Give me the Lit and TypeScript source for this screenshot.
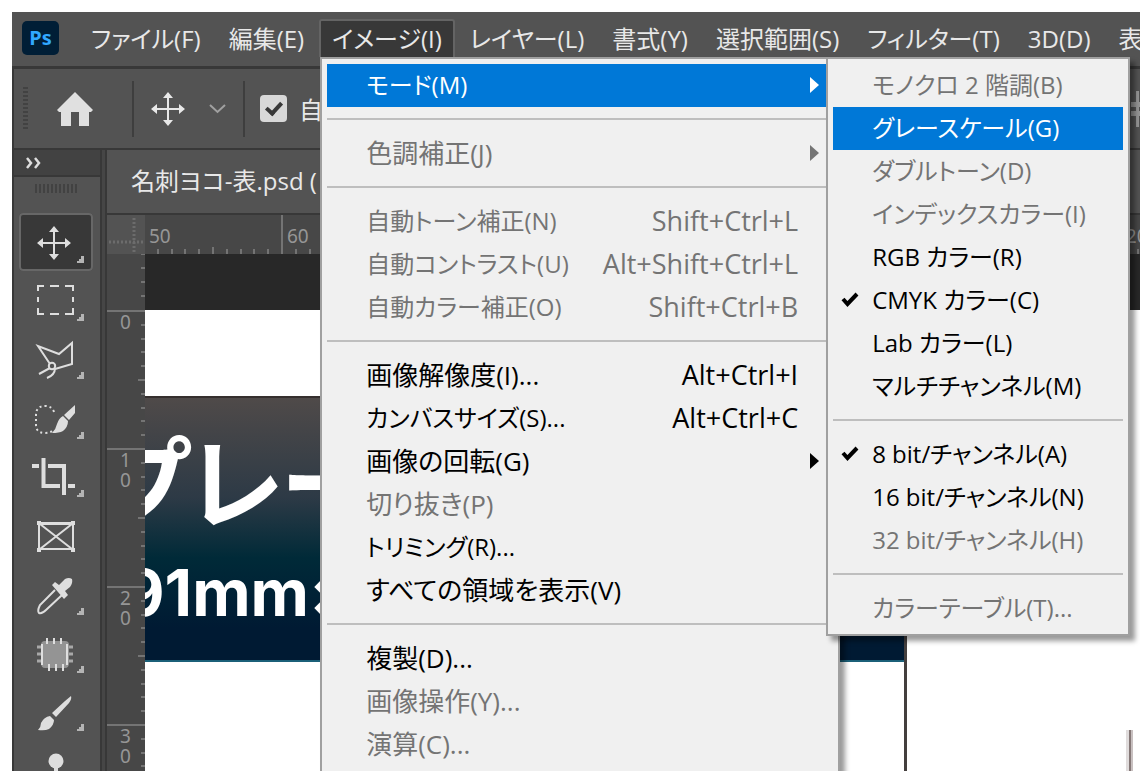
import { LitElement, html, svg, css, nothing } from "lit";
import { customElement, property } from "lit/decorators.js";

type Entry = {
  label: string;
  keys?: string;
  off?: boolean;
  active?: boolean;
  checked?: boolean;
  sub?: boolean;
};

const SEP = null;

const modeMenu: (Entry | null)[] = [
  { label: "モノクロ 2 階調(B)", off: true },
  { label: "グレースケール(G)", active: true },
  { label: "ダブルトーン(D)", off: true },
  { label: "インデックスカラー(I)", off: true },
  { label: "RGB カラー(R)" },
  { label: "CMYK カラー(C)", checked: true },
  { label: "Lab カラー(L)" },
  { label: "マルチチャンネル(M)" },
  SEP,
  { label: "8 bit/チャンネル(A)", checked: true },
  { label: "16 bit/チャンネル(N)" },
  { label: "32 bit/チャンネル(H)", off: true },
  SEP,
  { label: "カラーテーブル(T)...", off: true },
];

const imageMenu: (Entry | null)[] = [
  { label: "モード(M)", active: true, sub: true },
  SEP,
  { label: "色調補正(J)", off: true, sub: true },
  SEP,
  { label: "自動トーン補正(N)", keys: "Shift+Ctrl+L", off: true },
  { label: "自動コントラスト(U)", keys: "Alt+Shift+Ctrl+L", off: true },
  { label: "自動カラー補正(O)", keys: "Shift+Ctrl+B", off: true },
  SEP,
  { label: "画像解像度(I)...", keys: "Alt+Ctrl+I" },
  { label: "カンバスサイズ(S)...", keys: "Alt+Ctrl+C" },
  { label: "画像の回転(G)", sub: true },
  { label: "切り抜き(P)", off: true },
  { label: "トリミング(R)..." },
  { label: "すべての領域を表示(V)" },
  SEP,
  { label: "複製(D)..." },
  { label: "画像操作(Y)...", off: true },
  { label: "演算(C)...", off: true },
];

const bar = [
  "ファイル(F)",
  "編集(E)",
  "イメージ(I)",
  "レイヤー(L)",
  "書式(Y)",
  "選択範囲(S)",
  "フィルター(T)",
  "3D(D)",
  "表示(V)",
];

const moveGlyph = svg`
  <path d="M4 17H30M17 4V30" stroke="currentColor" stroke-width="2" fill="none"/>
  <path d="M17 0L22 6H12ZM17 34L22 28H12ZM0 17L6 12V22ZM34 17L28 12V22Z" fill="currentColor"/>`;

const tools: { name: string; art: unknown; more: boolean }[] = [
  { name: "移動", more: true, art: svg`<g transform="translate(18 13)">${moveGlyph}</g>` },
  {
    name: "長方形選択",
    more: true,
    art: svg`<path d="M19 20V15H25M31 15H40M46 15H54V20M54 26V31M54 37V43H46M40 43H31M25 43H19V37M19 31V26" fill="none" stroke="currentColor" stroke-width="2"/>`,
  },
  {
    name: "多角形選択",
    more: true,
    art: svg`<g fill="none" stroke="currentColor" stroke-width="2"><path d="M31 35L19 17L40 25L53 14V35L36 40"/><circle cx="33" cy="37" r="3.2"/><path d="M31 39L20 45M36 39Q36 46 28 49"/></g>`,
  },
  {
    name: "クイック選択",
    more: true,
    art: svg`<path d="M35 23Q33 17 26 17Q17 17 17 26V36Q17 44 26 44Q31 44 33 42" fill="none" stroke="currentColor" stroke-width="2" stroke-dasharray="2 3"/><path d="M56 16V24L50 31L45 26ZM44 27L49 32Q49 38 44 42Q40 44 33 44Q37 40 38 35Q40 29 44 27Z" fill="currentColor"/>`,
  },
  {
    name: "切り抜き",
    more: true,
    art: svg`<path d="M13 19H20M24.500 11V39H41M49 39H56M29 19H45V48" fill="none" stroke="currentColor" stroke-width="4"/>`,
  },
  {
    name: "フレーム",
    more: false,
    art: svg`<path d="M20 19H54V44H20ZM21 19L53 44M53 19L21 44" fill="none" stroke="currentColor" stroke-width="2"/><path d="M18 16H22V20H18ZM52 16H56V20H52ZM18 43H22V47H18ZM52 43H56V47H52Z" fill="currentColor"/><path d="M20 18.500H54" stroke="currentColor" stroke-width="3"/>`,
  },
  {
    name: "スポイト",
    more: true,
    art: svg`<path d="M36 25L21 40Q18 46 20 48Q23 49 27 45L43 30" fill="none" stroke="currentColor" stroke-width="2"/><path d="M33 20L36 17L40 20L46 14Q50 12 53 14Q54 18 51 22L46 26L49 30L45 34Z" fill="currentColor"/>`,
  },
  {
    name: "修復ブラシ",
    more: true,
    art: svg`<path d="M22 22Q22 18 26 18H46Q50 18 50 22V40Q50 45 46 45H26Q22 45 22 40Z" fill="#949494"/><g stroke="currentColor" stroke-width="2"><path d="M23 21V42M48 21V42"/><path d="M28 15V21M35 15V21M42 15V21M30 41V48M37 41V48M44 41V48"/></g><g stroke="#a8a8a8" stroke-width="3"><path d="M18 24H22M18 31H22M18 38H22M50 24H54M50 31H54M50 38H54"/></g>`,
  },
  {
    name: "ブラシ",
    more: true,
    art: svg`<path d="M52 15Q53 18 50 22L37 36L33 32L46 20ZM31 35L35 39Q35 44 30 48Q26 50 19 49Q22 46 22 42Q25 36 31 35Z" fill="currentColor"/>`,
  },
  {
    name: "スタンプ",
    more: true,
    art: svg`<circle cx="37" cy="20" r="7.500" fill="currentColor"/><path d="M35 24H39V40H35Z" fill="currentColor"/>`,
  },
];

@customElement("menu-panel")
class MenuPanel extends LitElement {
  @property({ attribute: false }) entries: (Entry | null)[] = [];

  static styles = css`
    :host {
      display: block;
      box-sizing: border-box;
      background: #f0f0f0;
      border: 2px solid #a0a0a0;
      padding: 5px 5px 4px;
      box-shadow: 5px 5px 5px rgba(0, 0, 0, 0.4);
    }
    ul {
      list-style: none;
      margin: 0;
      padding: 0;
    }
    .row {
      display: flex;
      align-items: center;
      width: 100%;
      height: 43px;
      margin: 0;
      padding: 0 13px 2px 0;
      border: 0;
      background: none;
      color: #000;
      font: inherit;
      font-size: 26px;
      font-feature-settings: inherit;
      text-align: left;
      white-space: nowrap;
    }
    .kana {
      font-size: 24px;
    }
    .off {
      color: #747474;
    }
    .active {
      background: #0078d7;
      color: #fff;
    }
    .mark {
      display: flex;
      flex: none;
      width: 39px;
      padding-left: 8px;
      box-sizing: border-box;
    }
    .label,
    .keys {
      line-height: 36px;
    }
    .label {
      flex: 1;
    }
    .keys {
      font-size: 27px;
    }
    .more {
      width: 10px;
      margin-left: 12px;
      display: flex;
    }
    .sep {
      height: 25px;
      padding-top: 11px;
      box-sizing: border-box;
    }
    hr {
      border: 0;
      height: 2px;
      margin: 0;
      background: #bebebe;
    }
  `;

  private entry(e: Entry | null) {
    if (!e) return html`<li class="sep"><hr /></li>`;
    const kana = /[ァ-ヶ]/.test(e.label) ? "kana" : "";
    const cls = `row ${kana} ${e.off ? "off" : ""} ${e.active ? "active" : ""}`;
    return html`<li>
      <button class=${cls} ?disabled=${e.off}>
        <span class="mark"
          >${e.checked
            ? html`<svg width="18" height="16" viewBox="0 0 18 16">
                <path d="M2 7L6.500 12L16 2" fill="none" stroke="#000" stroke-width="4" />
              </svg>`
            : nothing}</span
        >
        <span class="label">${e.label}</span>
        ${e.keys ? html`<span class="keys">${e.keys}</span>` : nothing}
        <span class="more"
          >${e.sub
            ? html`<svg width="9" height="16" viewBox="0 0 9 16">
                <path d="M0 0L9 8L0 16Z" fill="currentColor" />
              </svg>`
            : nothing}</span
        >
      </button>
    </li>`;
  }

  render() {
    return html`<ul>
      ${this.entries.map((e) => this.entry(e))}
    </ul>`;
  }
}

@customElement("tool-rail")
class ToolRail extends LitElement {
  static styles = css`
    :host {
      display: block;
      flex: none;
      width: 86px;
      background: #535353;
      border-right: 2px solid #383838;
      color: #dedede;
    }
    .head {
      display: flex;
      align-items: center;
      height: 25px;
      padding-left: 11px;
      background: #424242;
      border-bottom: 2px solid #383838;
    }
    .grip {
      height: 9px;
      width: 43px;
      margin: 7px 0 20px 21px;
      background: repeating-linear-gradient(90deg, #424242 0 2px, transparent 2px 4px);
    }
    .group {
      margin: 0 0 2px 5px;
    }
    button {
      display: block;
      width: 74px;
      height: 58px;
      box-sizing: border-box;
      padding: 0;
      border: 0;
      background: none;
      color: inherit;
      border-radius: 4px;
    }
    .on {
      background: #383838;
      box-shadow: inset 0 0 0 2px #676767;
    }
    svg {
      display: block;
    }
  `;

  render() {
    const groups = [tools.slice(0, 3), tools.slice(3, 6), tools.slice(6, 9), tools.slice(9)];
    return html`
      <div class="head">
        <svg width="18" height="12" viewBox="0 0 18 12">
          <path d="M2 1L6 6L2 11M10 1L14 6L10 11" fill="none" stroke="currentColor" stroke-width="2.500" />
        </svg>
      </div>
      <div class="grip"></div>
      ${groups.map(
        (g, gi) => html`<div class="group">
          ${g.map(
            (t, i) => html`<button aria-label=${t.name} class=${gi + i === 0 ? "on" : ""}>
              <svg width="74" height="58" viewBox="0 0 74 58">
                ${t.art}
                ${t.more ? svg`<path d="M65 43V50H58V48H60V46H62V43Z" fill="#b4b4b4"/>` : nothing}
              </svg>
            </button>`
          )}
        </div>`
      )}
    `;
  }
}

@customElement("doc-view")
class DocView extends LitElement {
  static styles = css`
    :host {
      display: flex;
      flex-direction: column;
      flex: 1;
      min-width: 0;
      min-height: 0;
      background: #535353;
      border-left: 2px solid #383838;
      margin-left: 3px;
    }
    .tab {
      height: 63px;
      box-sizing: border-box;
      padding-left: 24px;
      line-height: 62px;
      color: #e8e8e8;
      white-space: nowrap;
    }
    .grid {
      flex: 1;
      min-height: 0;
      display: grid;
      grid-template-columns: 38px minmax(0, 1fr);
      grid-template-rows: 39px minmax(0, 1fr);
      border-top: 2px solid #383838;
    }
    .corner {
      background: #535353;
    }
    svg {
      display: block;
    }
    .across,
    .down {
      background: #474747;
      display: flex;
      overflow: hidden;
      font-family: "Noto Sans", sans-serif;
      font-size: 19px;
      line-height: 20px;
      color: #969696;
    }
    .down {
      flex-direction: column;
    }
    .hseg {
      flex: none;
      width: 138px;
      box-sizing: border-box;
      height: 39px;
      display: flex;
      flex-direction: column;
      justify-content: space-between;
      border-right: 2px solid #747474;
    }
    .hseg span {
      padding: 11px 0 0 4px;
    }
    .vseg {
      flex: none;
      height: 138px;
      box-sizing: border-box;
      display: flex;
      justify-content: space-between;
      align-items: flex-start;
      border-top: 2px solid #747474;
    }
    .first {
      height: 56px;
      border-top: 0;
      justify-content: flex-end;
    }
    .vseg span {
      width: 12px;
      padding-left: 13px;
      word-break: break-all;
    }
    .canvas {
      background: #fff;
      border-top: 56px solid #282828;
      overflow: hidden;
      position: relative;
      display: flex;
      flex-direction: column;
    }
    .sheet {
      flex: 1;
      width: 759px;
      margin-top: 86px;
      border-top: 2px solid #352f2e;
      border-right: 3px solid #443f3e;
    }
    .art {
      height: 262px;
      overflow: hidden;
      border-bottom: 2px solid #1b6078;
      background: linear-gradient(#4f4a49, #2d3a46 38%, #002a38 61%, #001a33 88%);
      color: #fff;
      white-space: nowrap;
    }
    .big {
      margin: 0 0 0 -49px;
      font: 700 100px/160px "Noto Sans CJK JP", sans-serif;
      font-feature-settings: "palt";
    }
    .size {
      margin: 0 0 0 -22px;
      font: 700 64px/70px Inter, sans-serif;
    }
    .guide {
      position: absolute;
      right: 7px;
      bottom: 0;
      width: 2px;
      height: 41px;
      background: #857877;
      border-left: 3px solid #e0dcdc;
      border-right: 2px solid #c8c0c0;
    }
  `;

  render() {
    const cols = [50, 60, 70, 80, 90, 100, 110, 120];
    const rows = [0, 10, 20, 30];
    const marks = [1, 2, 3, 4, 5, 6, 7, 8, 9];
    return html`
      <div class="tab">名刺ヨコ-表.psd (</div>
      <div class="grid">
        <div class="corner">
          <svg width="38" height="39" viewBox="0 0 38 39">
            <path d="M27 3V38M2 27H37" stroke="#6c6c6c" stroke-width="3" stroke-dasharray="2 2" />
          </svg>
        </div>
        <div class="across">
          ${cols.map(
            (c) => html`<div class="hseg">
              <span>${c}</span>
              <svg width="136" height="7" viewBox="0 0 136 7">
                ${marks.map(
                  (m) =>
                    svg`<rect x=${Math.round(m * 13.8) - 2} y=${m === 5 ? 0 : 2} width="2" height="7" fill="#747474"/>`
                )}
              </svg>
            </div>`
          )}
        </div>
        <div class="down">
          <div class="vseg first">
            <svg width="4" height="56" viewBox="0 0 4 56">
              ${[0, 14, 28, 42].map((y) => svg`<rect y=${y - 1} width="4" height="2" fill="#747474"/>`)}
            </svg>
          </div>
          ${rows.map(
            (r) => html`<div class="vseg">
              <span>${r}</span>
              <svg width="7" height="136" viewBox="0 0 7 136">
                ${marks.map(
                  (m) =>
                    svg`<rect x=${m === 5 ? 0 : 3} y=${Math.round(m * 13.8) - 2} width="7" height="2" fill="#747474"/>`
                )}
              </svg>
            </div>`
          )}
        </div>
        <div class="canvas">
          <div class="sheet">
            <div class="art">
              <p class="big">プレート</p>
              <p class="size">91mm×</p>
            </div>
          </div>
          <div class="guide"></div>
        </div>
      </div>
    `;
  }
}

@customElement("app-root")
class AppRoot extends LitElement {
  static styles = css`
    :host {
      display: block;
      box-sizing: border-box;
      height: 100vh;
      padding: 12px 0 1px 12px;
      overflow: hidden;
      background: #fff;
      font-family: "Open Sans", "Noto Sans CJK JP", sans-serif;
      font-size: 24px;
      font-feature-settings: "palt";
    }
    .window {
      display: flex;
      flex-direction: column;
      height: 100%;
      overflow: hidden;
      position: relative;
      background: #535353;
      color: #e8e8e8;
    }
    nav {
      display: flex;
      align-items: flex-start;
      height: 54px;
      box-sizing: border-box;
      padding: 7px 0 0 10px;
      white-space: nowrap;
    }
    .logo {
      flex: none;
      width: 37px;
      height: 34px;
      margin: 2px 19px 0 0;
      border-radius: 5px;
      background: #001e36;
      color: #31a8ff;
      font: 700 20px/33px "Noto Sans", sans-serif;
      text-align: center;
    }
    .bar {
      display: flex;
      gap: 2px;
      margin: 0;
      padding: 0;
      list-style: none;
    }
    .bar li {
      position: relative;
    }
    .bar button {
      height: 38px;
      padding: 0 11px;
      border: 2px solid transparent;
      border-bottom: 0;
      border-radius: 3px 3px 0 0;
      background: none;
      color: inherit;
      font: inherit;
      font-feature-settings: inherit;
      line-height: 34px;
      display: block;
    }
    .bar .open {
      background: #383838;
      border-color: #646464;
    }
    .main {
      position: absolute;
      z-index: 1;
      left: 1px;
      top: 38px;
      width: 520px;
      height: 800px;
    }
    .child {
      position: absolute;
      z-index: 2;
      left: 507px;
      top: 38px;
      width: 304px;
    }
    .options {
      display: flex;
      align-items: center;
      height: 79px;
      border: 2px solid #383838;
      border-width: 3px 0 2px 2px;
      white-space: nowrap;
    }
    .grip {
      width: 5px;
      height: 43px;
      margin: 0 29px 0 9px;
      background: repeating-linear-gradient(#424242 0 2px, transparent 2px 4px);
    }
    .rule {
      width: 2px;
      height: 56px;
      background: #3e3e3e;
    }
    .options svg {
      display: block;
    }
    .home {
      margin-right: 39px;
    }
    .move {
      margin: 0 24px 0 17px;
    }
    .caret {
      margin-right: 17px;
    }
    label {
      display: flex;
      align-items: center;
      gap: 12px;
      margin-left: 15px;
    }
    input {
      appearance: none;
      width: 27px;
      height: 27px;
      margin: 0;
      border-radius: 4px;
      background: #d8d8d8;
      display: grid;
      place-items: center;
    }
    input::after {
      content: "";
      width: 6px;
      height: 12px;
      margin-bottom: 4px;
      border: solid #383838;
      border-width: 0 4px 4px 0;
      transform: rotate(42deg);
    }
    .align {
      margin-left: auto;
      margin-right: -14px;
      color: #969696;
    }
    .work {
      display: flex;
      flex: 1;
      min-height: 0;
      background: #464646;
      border-left: 2px solid #383838;
    }
  `;

  render() {
    return html`<div class="window">
      <nav>
        <span class="logo">Ps</span>
        <ul class="bar">
          ${bar.map((b, i) =>
            i === 2
              ? html`<li>
                  <button class="open">${b}</button>
                  <menu-panel class="main" .entries=${imageMenu}></menu-panel>
                  <menu-panel class="child" .entries=${modeMenu}></menu-panel>
                </li>`
              : html`<li><button>${b}</button></li>`
          )}
        </ul>
      </nav>
      <div class="options">
        <span class="grip"></span>
        <svg class="home" width="36" height="34" viewBox="0 0 36 34">
          <path d="M18 0L36 18L34 20H32V34H22V20H14V34H4V20H2L0 18Z" fill="#e0e0e0" />
        </svg>
        <span class="rule"></span>
        <svg class="move" width="34" height="34" viewBox="0 0 34 34">${moveGlyph}</svg>
        <svg class="caret" width="17" height="10" viewBox="0 0 17 10">
          <path d="M1 1L8.500 8L16 1" fill="none" stroke="#a0a0a0" stroke-width="2" />
        </svg>
        <span class="rule"></span>
        <label><input type="checkbox" checked />自動選択</label>
        <svg class="align" width="24" height="36" viewBox="0 0 24 36">
          <path d="M1 11H23V16H1ZM1 20H23V25H1ZM6 0H9V36H6Z" fill="currentColor" />
        </svg>
      </div>
      <div class="work">
        <tool-rail></tool-rail>
        <doc-view></doc-view>
      </div>
    </div>`;
  }
}
